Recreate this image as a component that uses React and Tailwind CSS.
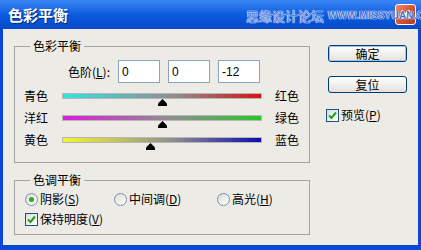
import React from "react";

const CJK = { fontFamily: '"Noto Sans CJK SC", "Noto Sans", sans-serif' };

function Thumb({ pct }) {
  return (
    <svg
      width="11"
      height="7"
      viewBox="0 0 11 7"
      className="absolute top-[10px]"
      style={{ left: `calc(${pct}% - 5px)` }}
    >
      <path d="M5.5 0 L10 4.5 L10 7 L1 7 L1 4.5 Z" fill="#000" />
    </svg>
  );
}

function SliderRow({ left, right, from, to, pct }) {
  return (
    <div className="flex items-center h-[14px]">
      <div className="w-[38px] text-[12px] leading-[14px] text-black">{left}</div>
      <div className="relative w-[200px] h-[14px] flex items-center">
        <div
          className="w-full h-[6px] border border-[#b7b7b7]"
          style={{ background: `linear-gradient(to right, ${from}, #8f8f8f 55%, ${to})` }}
        />
        <Thumb pct={pct} />
      </div>
      <div className="ml-[13px] text-[12px] leading-[14px] text-black">{right}</div>
    </div>
  );
}

function Check({ label, u }) {
  return (
    <div className="flex items-center h-[14px]">
      <div className="w-[13px] h-[13px] border border-[#1c5180] bg-gradient-to-br from-[#dcdcd6] to-white flex items-center justify-center">
        <svg width="9" height="9" viewBox="0 0 9 9">
          <path d="M1 4.5 L3.5 7 L8 1.5" stroke="#21a121" strokeWidth="2" fill="none" />
        </svg>
      </div>
      <span className="ml-[2px] text-[12px] leading-[14px] text-black">
        {label}(<span className="underline">{u}</span>)
      </span>
    </div>
  );
}

function Radio({ label, u, on, w }) {
  return (
    <div className={`flex items-center h-[14px] ${w}`}>
      <div className="w-[13px] h-[13px] rounded-full border border-[#7a8fa8] bg-gradient-to-br from-[#dcdcd6] to-white flex items-center justify-center">
        {on && <div className="w-[5px] h-[5px] rounded-full bg-[#2fa82f]" />}
      </div>
      <span className="ml-[2px] text-[12px] leading-[14px] text-black">
        {label}(<span className="underline">{u}</span>)
      </span>
    </div>
  );
}

function Btn({ children, focus }) {
  return (
    <div className="w-[79px] h-[17px] rounded-[3px] border border-[#003c74] bg-gradient-to-b from-white to-[#e3e2dc] flex items-center justify-center">
      <div
        className={`w-full h-full rounded-[2px] flex items-center justify-center text-[12px] leading-[14px] text-black ${
          focus ? "border border-[#9fc2f0]" : ""
        }`}
      >
        {children}
      </div>
    </div>
  );
}

export default function App() {
  return (
    <div className="w-[421px] h-[250px] bg-[#0a46d8] flex flex-col overflow-hidden" style={CJK}>
      {/* Title bar */}
      <div className="relative h-[29px] bg-gradient-to-b from-[#3b86f5] via-[#0a5ce0] to-[#0749c8] flex items-center justify-between pl-[8px] pr-[5px]">
        <div className="text-white text-[15px] font-bold leading-[16px] [text-shadow:1px_1px_0_#0a2a80]">
          色彩平衡
        </div>
        <div className="w-[21px] h-[21px] rounded-[3px] border border-white bg-gradient-to-br from-[#ee8a6a] via-[#d9542f] to-[#b83a18] flex items-center justify-center">
          <svg width="11" height="11" viewBox="0 0 11 11">
            <path d="M1.5 1.5 L9.5 9.5 M9.5 1.5 L1.5 9.5" stroke="white" strokeWidth="2" />
          </svg>
        </div>
        <div className="absolute z-10 left-[246px] top-[8px] flex items-center whitespace-nowrap">
          <span className="text-[13px] leading-[15px] text-[#5584de] [text-shadow:0_0_1px_#fff,0_0_1px_#fff,0_0_1px_#fff]">
            思缘设计论坛
          </span>
          <span
            className="ml-[4px] text-[10px] leading-[12px] font-bold text-[#3f72d6] tracking-[0.2px] [text-shadow:0_0_1px_#fff,0_0_1px_#fff,0_0_1px_#fff]"
            style={{ fontFamily: '"Liberation Sans", sans-serif' }}
          >
            WWW.MISSYUAN.COM
          </span>
        </div>
      </div>

      {/* Body */}
      <div className="flex-1 mx-[3px] mb-[5px] bg-[#ecebe6] flex pl-[11px] pt-[17px]">
        <div className="flex flex-col">
          {/* Group 1 */}
          <div className="relative w-[296px] h-[117px] border border-[#a3a3a3] pt-[13px]">
            <span className="absolute left-[15px] -top-[8px] px-[3px] bg-[#ecebe6] text-[12px] leading-[14px] text-black">
              色彩平衡
            </span>
            <div className="flex items-center">
              <div className="w-[95px] text-right text-[12px] leading-[14px] text-black">
                色阶(<span className="underline">L</span>):
              </div>
              <div className="ml-[8px] flex gap-[8px]">
                {["0", "0", "-12"].map((v, i) => (
                  <div
                    key={i}
                    className="w-[42px] h-[23px] bg-white border border-[#8ea4bd] flex items-center pl-[3px] text-[12px] text-black"
                    style={{ fontFamily: '"Liberation Sans", sans-serif' }}
                  >
                    {v}
                  </div>
                ))}
              </div>
            </div>
            <div className="mt-[6px] pl-[9px] flex flex-col gap-[8px]">
              <SliderRow left="青色" right="红色" from="#35e2e2" to="#d41414" pct={50} />
              <SliderRow left="洋红" right="绿色" from="#d81fd8" to="#27c727" pct={50} />
              <SliderRow left="黄色" right="蓝色" from="#f6f62a" to="#0c0cb4" pct={44} />
            </div>
          </div>

          {/* Group 2 */}
          <div className="relative mt-[17px] w-[296px] h-[55px] border border-[#a3a3a3] pt-[11px] pl-[10px]">
            <span className="absolute left-[15px] -top-[8px] px-[3px] bg-[#ecebe6] text-[12px] leading-[14px] text-black">
              色调平衡
            </span>
            <div className="flex">
              <Radio label="阴影" u="S" on w="w-[89px]" />
              <Radio label="中间调" u="D" w="w-[103px]" />
              <Radio label="高光" u="H" w="" />
            </div>
            <div className="mt-[6px]">
              <Check label="保持明度" u="V" />
            </div>
          </div>
        </div>

        {/* Right column */}
        <div className="ml-[18px] -mt-[1px] flex flex-col">
          <Btn focus>确定</Btn>
          <div className="mt-[14px]">
            <Btn>复位</Btn>
          </div>
          <div className="mt-[15px] -ml-[2px]">
            <Check label="预览" u="P" />
          </div>
        </div>
      </div>
    </div>
  );
}
